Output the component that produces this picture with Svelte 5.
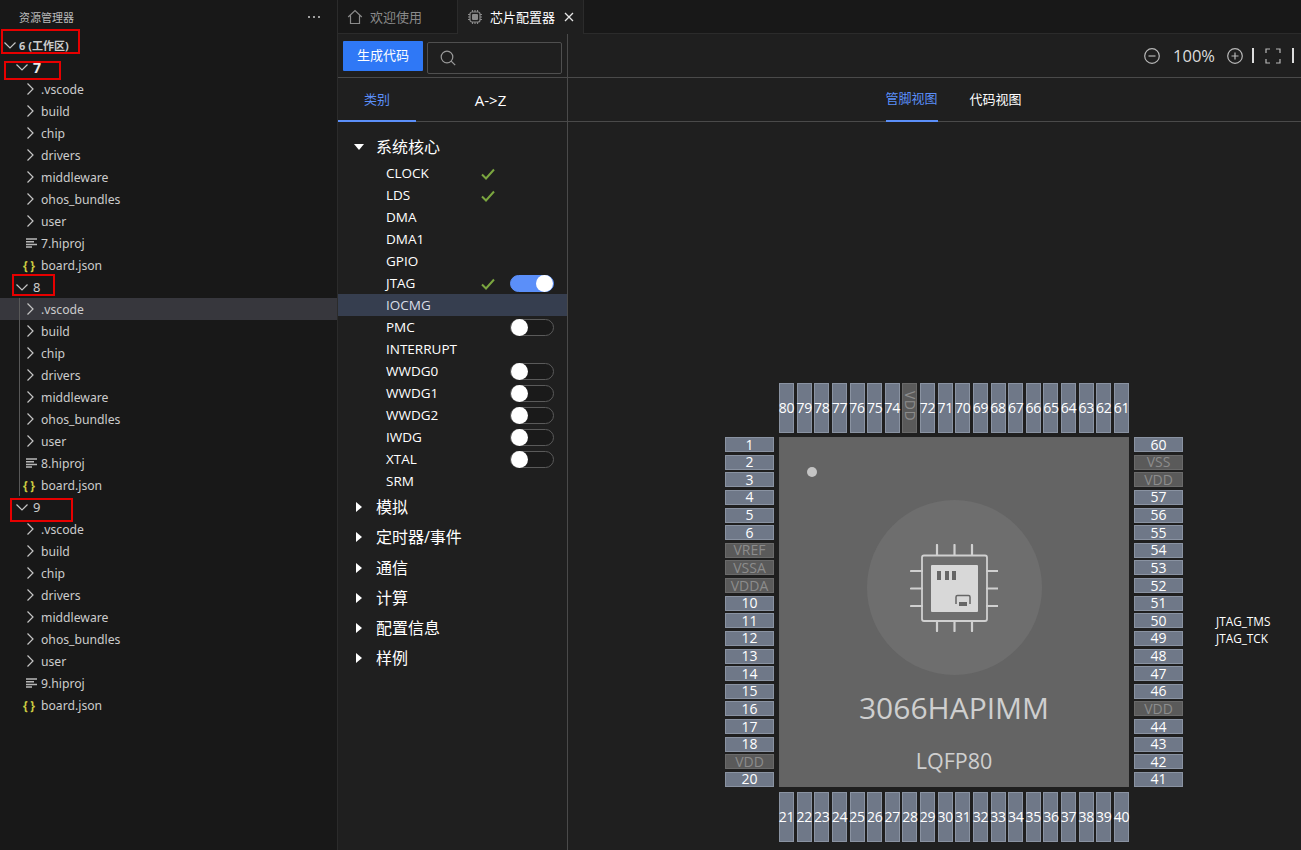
<script>
  const children = [".vscode", "build", "chip", "drivers", "middleware", "ohos_bundles", "user"];

  const projects = [
    { name: "7", big: true },
    { name: "8", guide: true },
    { name: "9" }
  ];

  const core = [
    { name: "CLOCK", ok: true },
    { name: "LDS", ok: true },
    { name: "DMA" },
    { name: "DMA1" },
    { name: "GPIO" },
    { name: "JTAG", ok: true, toggle: "on" },
    { name: "IOCMG", active: true },
    { name: "PMC", toggle: "off" },
    { name: "INTERRUPT" },
    { name: "WWDG0", toggle: "off" },
    { name: "WWDG1", toggle: "off" },
    { name: "WWDG2", toggle: "off" },
    { name: "IWDG", toggle: "off" },
    { name: "XTAL", toggle: "off" },
    { name: "SRM" }
  ];

  const groups = ["模拟", "定时器/事件", "通信", "计算", "配置信息", "样例"];

  // pin number -> power pin name, everything else just shows its number
  const power = { 7: "VREF", 8: "VSSA", 9: "VDDA", 19: "VDD", 45: "VDD", 58: "VDD", 59: "VSS", 73: "VDD" };
  const signals = { 50: "JTAG_TMS", 49: "JTAG_TCK" };

  const range = (from, to) => {
    const out = [];
    const step = from < to ? 1 : -1;
    for (let n = from; n !== to + step; n += step) out.push(n);
    return out;
  };
  const pinLabel = (n) => power[n] ?? String(n);

  const leftPins = range(1, 20);
  const bottomPins = range(21, 40);
  const rightPins = range(60, 41);
  const topPins = range(80, 61);
</script>

{#snippet chevron()}
  <svg class="chev" viewBox="0 0 16 16"><path d="M5.5 2.5 11 8l-5.5 5.5" /></svg>
{/snippet}

{#snippet chevronDown()}
  <svg class="chev" viewBox="0 0 16 16"><path d="M2.5 5.5 8 11l5.5-5.5" /></svg>
{/snippet}

<div class="app">
  <aside class="sidebar">
    <div class="side-title">
      <span>资源管理器</span>
      <svg class="more" viewBox="0 0 14 4"><circle cx="2" cy="2" r="1" /><circle cx="7" cy="2" r="1" /><circle cx="12" cy="2" r="1" /></svg>
    </div>
    <div class="tree">
      <div class="row root">{@render chevronDown()}<span>6 (工作区)</span></div>
      {#each projects as p}
        <div class="row project" class:big={p.big}>{@render chevronDown()}<span>{p.name}</span></div>
        <div class="kids" class:guide={p.guide}>
          {#each children as c, i}
            <div class="row child" class:selected={p.guide && i === 0}>{@render chevron()}<span>{c}</span></div>
          {/each}
          <div class="row file">
            <svg class="lines" viewBox="0 0 11 10"><path d="M0 1h11M0 3.7h8M0 6.4h11M0 9h6" /></svg>
            <span>{p.name}.hiproj</span>
          </div>
          <div class="row file">
            <span class="braces"><span>{"{"}</span><span>{"}"}</span></span>
            <span>board.json</span>
          </div>
        </div>
      {/each}
    </div>
    <div class="mark m1"></div>
    <div class="mark m2"></div>
    <div class="mark m3"></div>
    <div class="mark m4"></div>
  </aside>

  <main class="content">
    <div class="tabbar">
      <div class="tab first">
        <svg class="tab-icon" viewBox="0 0 16 16"><path d="M1.2 8 8 1.5 14.8 8M3.5 6.5v8h9v-8" /></svg>
        <span>欢迎使用</span>
      </div>
      <div class="tab current">
        <svg class="tab-icon cpu" viewBox="0 0 16 16">
          <rect x="3" y="3" width="10" height="10" rx="2" />
          <rect class="core" x="5" y="5" width="6" height="6" rx="1" />
          <path d="M5.5 1v2M8 1v2M10.500 1v2M5.500 13v2M8 13v2M10.500 13v2M1 5.500h2M1 8h2M1 10.500h2M13 5.500h2M13 8h2M13 10.500h2" />
        </svg>
        <span>芯片配置器</span>
        <svg class="close" viewBox="0 0 10 10"><path d="M1 1l8 8M9 1 1 9" /></svg>
      </div>
    </div>

    <div class="editor">
      <section class="modules">
        <div class="tools">
          <button class="gen">生成代码</button>
          <div class="search">
            <svg viewBox="0 0 16 16"><circle cx="7" cy="7" r="5.800" /><path d="m11.200 11.200 4 4" /></svg>
          </div>
        </div>
        <div class="sort-tabs">
          <div class="sort on">类别</div>
          <div class="sort rest">A-&gt;Z</div>
        </div>
        <div class="list">
          <div class="group"><span class="tri down"></span>系统核心</div>
          {#each core as m}
            <div class="mod" class:active={m.active}>
              <span class="mod-name">{m.name}</span>
              {#if m.ok}
                <svg class="tick" viewBox="0 0 14 12"><path d="M1 6.500 5 10.500 13 1.500" /></svg>
              {/if}
              {#if m.toggle}
                <span class="toggle" class:on={m.toggle === "on"}><span class="knob"></span></span>
              {/if}
            </div>
          {/each}
          {#each groups as g}
            <div class="group"><span class="tri"></span>{g}</div>
          {/each}
        </div>
      </section>

      <section class="view">
        <div class="zoombar">
          <svg class="zi" viewBox="0 0 16 16"><circle cx="8" cy="8" r="7.300" /><path d="M4.500 8h7" /></svg>
          <span class="pct">100%</span>
          <svg class="zi" viewBox="0 0 16 16"><circle cx="8" cy="8" r="7.300" /><path d="M4.500 8h7M8 4.500v7" /></svg>
          <span class="sep"></span>
          <svg class="zi full" viewBox="0 0 16 16"><path d="M1 5V1h4M11 1h4v4M15 11v4h-4M5 15H1v-4" /></svg>
          <span class="sep last"></span>
        </div>
        <div class="view-tabs">
          <div class="vt on">管脚视图</div>
          <div class="vt">代码视图</div>
        </div>
        <div class="canvas">
          <div class="package">
            <div class="pins-top">
              {#each topPins as n}
                <div class="pin tall" class:off={power[n]}>{pinLabel(n)}</div>
              {/each}
            </div>
            <div class="pins-left">
              {#each leftPins as n}
                <div class="pin wide" class:off={power[n]}>{pinLabel(n)}</div>
              {/each}
            </div>
            <div class="body">
              <span class="dot"></span>
              <div class="disc">
                <svg viewBox="0 0 88 88" width="88" height="88">
                  <rect class="die" x="12" y="11.500" width="65" height="65.500" rx="2" />
                  <rect class="fill" x="21" y="21" width="47" height="47" rx="1" />
                  <path class="legs" d="M27 1v10M44.500 1v10M62 1v10M27 77v10M44.500 77v10M62 77v10M1 27h11M1 44.500h11M1 62h11M77 27h11M77 44.500h11M77 62h11" />
                  <path class="mark-dark" d="M27 27h4v9h-4zM35 27h4v9h-4zM42 27h4v9h-4zM49 58h8v4h-8z" />
                  <path class="arch" d="M46 60v-7a1.500 1.500 0 0 1 1.500-1.500h11a1.500 1.500 0 0 1 1.500 1.500v7" />
                </svg>
              </div>
              <div class="chip-name">3066HAPIMM</div>
              <div class="chip-pack">LQFP80</div>
            </div>
            <div class="pins-right">
              {#each rightPins as n}
                <div class="pin-row">
                  <div class="pin wide" class:off={power[n]}>{pinLabel(n)}</div>
                  {#if signals[n]}<span class="signal">{signals[n]}</span>{/if}
                </div>
              {/each}
            </div>
            <div class="pins-bottom">
              {#each bottomPins as n}
                <div class="pin tall">{n}</div>
              {/each}
            </div>
          </div>
        </div>
      </section>
    </div>
  </main>
</div>

<style>
  :global(body) {
    margin: 0;
    background: #1f1f1f;
    overflow: hidden;
  }

  .app {
    display: flex;
    width: 1301px;
    height: 850px;
    overflow: hidden;
    color: #fff;
    font-family: "Open Sans", "Noto Sans CJK SC", sans-serif;
  }

  /* explorer */
  .sidebar {
    position: relative;
    width: 337px;
    flex: none;
    background: #181818;
    border-right: 1px solid #2b2b2b;
    color: #cccccc;
    font-size: 12.200px;
    font-family: "Noto Sans", "Noto Sans CJK SC", sans-serif;
  }
  .side-title {
    display: flex;
    align-items: center;
    justify-content: space-between;
    height: 34px;
    padding: 0 16px 0 19px;
    font-size: 11px;
    color: #bbbbbb;
  }
  .more {
    width: 14px;
    height: 4px;
    fill: #cccccc;
  }
  .row {
    display: flex;
    align-items: center;
    height: 22px;
    white-space: nowrap;
  }
  .chev {
    width: 16px;
    height: 16px;
    flex: none;
    fill: none;
    stroke: #c5c5c5;
    stroke-width: 1.200;
  }
  .root {
    padding-left: 2px;
    font-size: 11px;
    font-weight: 700;
  }
  .root .chev {
    margin-right: 1px;
  }
  .project {
    padding-left: 14px;
    font-size: 13px;
  }
  .project .chev {
    margin-right: 3px;
  }
  .project.big span {
    font-size: 14px;
    font-weight: 700;
    color: #e8e8e8;
  }
  .kids {
    position: relative;
  }
  .kids.guide::before {
    content: "";
    position: absolute;
    left: 19px;
    top: 0;
    bottom: 0;
    width: 1px;
    background: #585858;
    z-index: 1;
  }
  .child {
    padding-left: 22px;
  }
  .child .chev {
    margin-right: 3px;
  }
  .selected {
    background: #37373d;
  }
  .file {
    padding-left: 26px;
  }
  .lines {
    width: 11px;
    height: 10px;
    margin-right: 4px;
    fill: none;
    stroke: #b8b8b8;
    stroke-width: 1.500;
  }
  .braces {
    display: flex;
    align-items: center;
    justify-content: space-between;
    width: 12px;
    margin-left: -3px;
    margin-right: 6px;
    color: #cbcb41;
    font-weight: 700;
    font-size: 12px;
  }
  .mark {
    position: absolute;
    border: 2px solid #e60000;
    box-sizing: border-box;
  }
  .m1 { left: 1px; top: 29px; width: 79px; height: 25px; }
  .m2 { left: 4px; top: 61px; width: 57px; height: 19px; }
  .m3 { left: 12px; top: 274px; width: 43px; height: 22px; }
  .m4 { left: 10px; top: 498px; width: 63px; height: 24px; }

  .content {
    flex: 1;
    min-width: 0;
    display: flex;
    flex-direction: column;
  }

  /* editor tabs */
  .tabbar {
    display: flex;
    height: 34px;
    flex: none;
    background: #181818;
    box-sizing: border-box;
    border-bottom: 1px solid #2b2b2b;
    font-size: 13px;
  }
  .tab {
    display: flex;
    align-items: center;
    box-sizing: border-box;
    height: 34px;
    border-right: 1px solid #2b2b2b;
  }
  .tab span {
    margin-bottom: 2px;
  }
  .first {
    width: 120px;
    padding-left: 9px;
    gap: 7px;
    color: #8a8a8a;
  }
  .current {
    width: 126px;
    padding-left: 9px;
    background: #1f1f1f;
    color: #fff;
    gap: 7px;
  }
  .tab-icon {
    width: 16px;
    height: 16px;
    fill: none;
    stroke: #8a8a8a;
    stroke-width: 1.200;
  }
  .cpu .core {
    fill: #8a8a8a;
    stroke: none;
  }
  .close {
    width: 10px;
    height: 10px;
    margin-left: 2px;
    fill: none;
    stroke: #e6e6e6;
    stroke-width: 1.300;
  }

  .editor {
    flex: 1;
    display: flex;
    min-height: 0;
    background: #1f1f1f;
  }

  /* module list */
  .modules {
    width: 230px;
    flex: none;
    box-sizing: border-box;
    border-right: 1px solid #4a4a4a;
  }
  .tools {
    display: flex;
    box-sizing: border-box;
    height: 44px;
    padding: 7px 5px 0;
    border-bottom: 1px solid #4a4a4a;
  }
  .gen {
    width: 80px;
    height: 30px;
    border: 0;
    border-radius: 1px;
    background: #2f78f6;
    color: #fff;
    font: inherit;
    font-size: 13px;
    padding: 0 0 4px;
  }
  .search {
    display: flex;
    align-items: center;
    box-sizing: border-box;
    width: 135px;
    height: 32px;
    margin: 1px 0 0 4px;
    padding-left: 12px;
    border: 1px solid #4f4f4f;
    border-radius: 2px;
  }
  .search svg {
    width: 16px;
    height: 16px;
    fill: none;
    stroke: #9a9a9a;
    stroke-width: 1.200;
  }
  .sort-tabs {
    display: flex;
    box-sizing: border-box;
    height: 44px;
    border-bottom: 1px solid #4a4a4a;
    font-size: 13px;
  }
  .sort {
    display: flex;
    align-items: center;
    justify-content: center;
    height: 44px;
    box-sizing: border-box;
  }
  .sort.on {
    width: 78px;
    color: #5b8ff9;
    border-bottom: 2px solid #5b8ff9;
    padding-bottom: 2px;
  }
  .sort.rest {
    flex: 1;
    height: 43px;
    padding-right: 2px;
    font-size: 15px;
  }
  .list {
    padding-top: 10px;
  }
  .group {
    display: flex;
    align-items: center;
    box-sizing: border-box;
    height: 30.200px;
    padding: 0 0 2px 16px;
    font-size: 16px;
  }
  .tri {
    width: 0;
    height: 0;
    margin: 2px 14px 0 2px;
    border-left: 6px solid #fff;
    border-top: 5px solid transparent;
    border-bottom: 5px solid transparent;
  }
  .tri.down {
    margin: 2px 12px 0 0;
    border-left: 5px solid transparent;
    border-right: 5px solid transparent;
    border-top: 6px solid #fff;
    border-bottom: 0;
  }
  .mod {
    position: relative;
    display: flex;
    align-items: center;
    height: 22px;
    padding-left: 48px;
    font-size: 13.500px;
  }
  .mod.active {
    background: #363e4f;
    color: #d8dde6;
  }
  .tick {
    position: absolute;
    left: 143px;
    top: 6px;
    width: 14px;
    height: 12px;
    fill: none;
    stroke: #7ba63f;
    stroke-width: 2;
  }
  .toggle {
    position: absolute;
    left: 172px;
    top: 3px;
    box-sizing: border-box;
    width: 44px;
    height: 17px;
    border: 1px solid #5a5a5a;
    border-radius: 9px;
    background: #1a1a1a;
  }
  .toggle.on {
    background: #5b8ff9;
    border-color: #5b8ff9;
  }
  .knob {
    position: absolute;
    left: 0;
    top: -1px;
    width: 17px;
    height: 17px;
    border-radius: 50%;
    background: #fff;
  }
  .toggle.on .knob {
    left: auto;
    right: 0;
  }

  /* pin view */
  .view {
    flex: 1;
    min-width: 0;
    display: flex;
    flex-direction: column;
  }
  .zoombar {
    display: flex;
    align-items: center;
    justify-content: flex-end;
    box-sizing: border-box;
    height: 44px;
    padding-right: 7px;
    border-bottom: 1px solid #4a4a4a;
    font-size: 16.500px;
    color: #dcdcdc;
  }
  .zi {
    width: 16px;
    height: 16px;
    fill: none;
    stroke: #b8b8b8;
    stroke-width: 1.200;
  }
  .pct {
    width: 42px;
    margin: 0 12px 0 13px;
    text-align: center;
  }
  .sep {
    width: 2px;
    height: 15px;
    margin-left: 9px;
    background: #dcdcdc;
  }
  .sep.last {
    margin-left: 11px;
  }
  .full {
    margin-left: 11px;
  }
  .view-tabs {
    display: flex;
    justify-content: center;
    gap: 32px;
    box-sizing: border-box;
    height: 44px;
    padding-left: 38px;
    border-bottom: 1px solid #4a4a4a;
    font-size: 13px;
  }
  .vt {
    display: flex;
    align-items: center;
    justify-content: center;
    box-sizing: border-box;
    width: 52px;
    height: 44px;
    padding-bottom: 4px;
  }
  .vt.on {
    color: #5b8ff9;
    border-bottom: 2px solid #5b8ff9;
  }

  .canvas {
    flex: 1;
    display: flex;
    align-items: flex-end;
    padding: 0 0 13px 157px;
    min-height: 0;
  }
  .package {
    display: grid;
    grid-template-columns: 49px 350px 49px;
    grid-template-rows: 50px 350px 50px;
    column-gap: 5px;
    grid-template-areas:
      ". top ."
      "left body right"
      ". bottom .";
  }
  .pins-top,
  .pins-bottom {
    display: flex;
    justify-content: space-between;
  }
  .pins-top {
    grid-area: top;
    margin-top: -4px;
  }
  .pins-bottom {
    grid-area: bottom;
    margin-top: 5px;
  }
  .pins-left,
  .pins-right {
    display: flex;
    flex-direction: column;
    justify-content: space-between;
  }
  .pins-left {
    grid-area: left;
  }
  .pins-right {
    grid-area: right;
  }
  .pin {
    display: flex;
    align-items: center;
    justify-content: center;
    box-sizing: border-box;
    background: #6f7888;
    border: 1px solid #8a93a2;
    color: #fff;
    font-size: 14px;
    line-height: 1;
    white-space: nowrap;
  }
  .pin.wide {
    width: 49px;
    height: 15px;
    flex: none;
  }
  .pin.tall {
    width: 15px;
    height: 50px;
    letter-spacing: -0.300px;
  }
  .pin.off {
    background: #5a5a5a;
    border-color: #6a6a6a;
    color: #8c8c8c;
  }
  .pin.tall.off {
    writing-mode: vertical-rl;
    letter-spacing: 0.500px;
    padding-bottom: 4px;
  }
  .pin-row {
    display: flex;
    align-items: center;
    height: 15px;
  }
  .signal {
    margin-left: 33px;
    font-size: 11.800px;
    white-space: nowrap;
  }
  .body {
    grid-area: body;
    position: relative;
    display: flex;
    flex-direction: column;
    align-items: center;
    padding-top: 63px;
    box-sizing: border-box;
    background: #646464;
    color: #cfcfcf;
  }
  .dot {
    position: absolute;
    left: 28px;
    top: 30px;
    width: 10px;
    height: 10px;
    border-radius: 50%;
    background: #c4c4c4;
  }
  .disc {
    display: flex;
    align-items: center;
    justify-content: center;
    width: 175px;
    height: 175px;
    border-radius: 50%;
    background: #6e6e6e;
  }
  .die {
    fill: none;
    stroke: #d0d0d0;
    stroke-width: 1.800;
  }
  .fill {
    fill: #d8d8d8;
  }
  .legs {
    stroke: #d0d0d0;
    stroke-width: 2.200;
    stroke-linecap: round;
    fill: none;
  }
  .mark-dark {
    fill: #666;
  }
  .arch {
    fill: none;
    stroke: #666;
    stroke-width: 1.500;
  }
  .chip-name {
    margin-top: 9px;
    font-size: 30px;
    line-height: 48px;
    white-space: nowrap;
  }
  .chip-pack {
    margin-top: 13px;
    font-size: 21.500px;
    line-height: 32px;
  }
</style>
